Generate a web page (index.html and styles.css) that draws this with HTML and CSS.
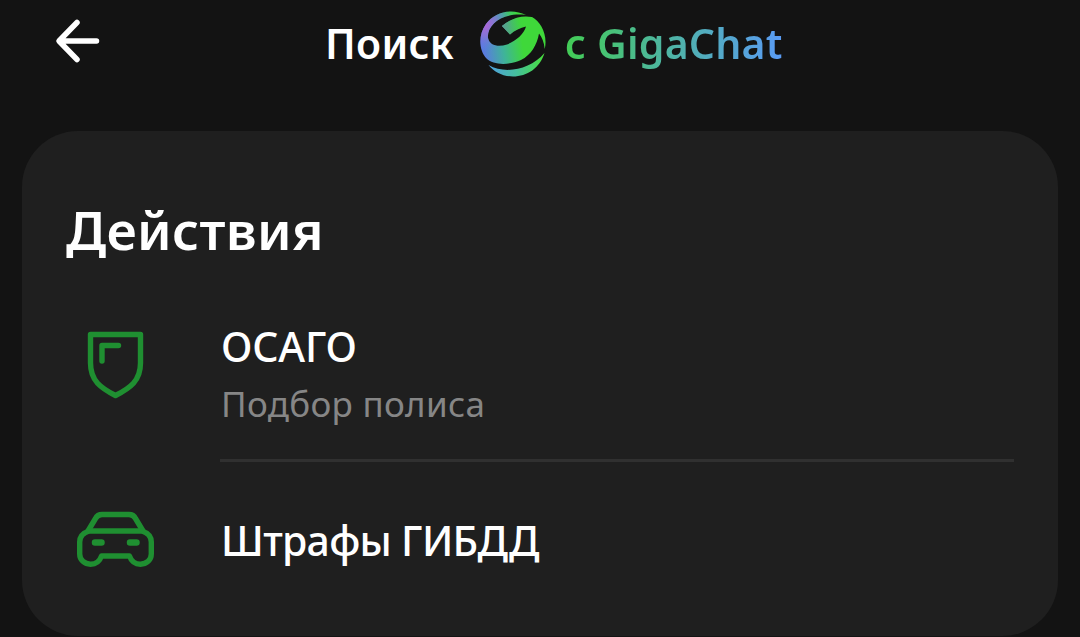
FILE: index.html
```
<!DOCTYPE html>
<html lang="ru">
<head>
<meta charset="UTF-8">
<meta name="viewport" content="width=device-width, initial-scale=1.0">
<title>Поиск с GigaChat</title>
<link rel="stylesheet" href="styles.css">
</head>
<body>

<!-- Шапка -->
<header class="header">
  <button class="back" aria-label="Назад">
    <svg width="48" height="48" viewBox="0 0 48 48">
      <path d="M25 5.500 L7 24 L25 42.500 M7.500 24 H44.500" />
    </svg>
  </button>
  <h1 class="header-title">
    <span class="word-search">Поиск</span>
    <svg class="logo" width="66" height="66" viewBox="0 0 66 66">
      <defs>
        <linearGradient id="ball" gradientUnits="userSpaceOnUse" x1="3" y1="36" x2="42" y2="30">
          <stop offset="0" stop-color="#5a7be0" />
          <stop offset="0.5" stop-color="#3fb39a" />
          <stop offset="1" stop-color="#3fd83a" />
        </linearGradient>
        <radialGradient id="violet" gradientUnits="userSpaceOnUse" cx="5" cy="14" r="27">
          <stop offset="0" stop-color="#b065d8" />
          <stop offset="0.4" stop-color="#8f70d8" stop-opacity="0.8" />
          <stop offset="1" stop-color="#5a7be8" stop-opacity="0" />
        </radialGradient>
        <linearGradient id="arc" x1="0" y1="0" x2="1" y2="0">
          <stop offset="0" stop-color="#4f9fe0" />
          <stop offset="0.5" stop-color="#45bf9c" />
          <stop offset="1" stop-color="#48e03a" />
        </linearGradient>
        <linearGradient id="tail" gradientUnits="userSpaceOnUse" x1="22" y1="18" x2="44" y2="12">
          <stop offset="0" stop-color="#5a9a90" />
          <stop offset="1" stop-color="#3fc850" stop-opacity="0" />
        </linearGradient>
        <path id="swirl" d="M46 4 C32 -3 15 0.500 6 13 C-2 24 -1 39 6 47 C14 55 30 54 41 49 C51 44 57 34 59 22.500 C62 26 64 31 64.700 38 C68 24 61 11 52 6 C42 4 31 7 22 15 L30 23.500 C35 19 40 17 46 15.500 C44 23 36 30 27 33.500 C18 36.500 9.500 34.500 8 27 C6.500 14 22 1 46 4 Z" />
      </defs>
      <use href="#swirl" fill="url(#ball)" />
      <use href="#swirl" fill="url(#violet)" />
      <path fill="url(#tail)" d="M22 15 Q32 7 44 5.300 L46 15.500 Q37 17.500 30 23.500 Z" />
      <path fill="url(#arc)" d="M8.500 54 C25 63.500 50 59 64.500 42 C60 57 47 65.500 33 65.500 C23 65.500 14 61 8.500 54 Z" />
    </svg>
    <span class="word-giga">с GigaChat</span>
  </h1>
</header>

<!-- Карточка с действиями -->
<main class="card">
  <h2 class="card-title">Действия</h2>

  <div class="action">
    <svg class="icon" width="80" height="80" viewBox="0 0 80 80">
      <path d="M15.500 9.500 H65.500 V38 C65.500 56 55 63 40.500 70.500 C26 63 15.500 56 15.500 38 Z" />
      <path d="M27 36 V20.500 H43.500" />
    </svg>
    <div class="action-text">
      <div class="action-name osago">ОСАГО</div>
      <div class="action-info">Подбор полиса</div>
    </div>
  </div>

  <div class="action last">
    <svg class="icon car" width="80" height="80" viewBox="0 0 80 80">
      <path d="M13 31 L20.500 18.500 Q22.500 14.500 27 14.500 H54 Q58.500 14.500 60.500 18.500 L68 31" />
      <path d="M14 31 H67 C73 33 76.300 37 76.300 42 V54 C76.300 60 71.500 64.200 65.500 64.200 C59.500 64.200 56 60.500 54.500 56 H26.500 C25 60.500 21.500 64.200 15.500 64.200 C9.500 64.200 4.700 60 4.700 54 V42 C4.700 37 8 33 14 31 Z" />
      <path class="lamp" d="M20 42.500 H26.500 M55 42.500 H61.500" />
    </svg>
    <div class="action-text">
      <div class="action-name fines">Штрафы ГИБДД</div>
    </div>
  </div>
</main>

</body>
</html>
```

FILE: styles.css
```
* {
    box-sizing: border-box;
}
body {
    margin: 0;
    background-color: #131313;
    color: white;
    font-family: "Noto Sans", "Open Sans", sans-serif;
    overflow: hidden;
}
h1, h2 {
    margin: 0;
}

/* Шапка */
.header {
    display: grid;
    grid-template-columns: 102px 1fr;
    align-items: center;
    height: 85px;
    padding-left: 52px;
    margin-bottom: 46px;
}
.back {
    width: 48px;
    height: 48px;
    margin-bottom: 3px;
    padding: 0;
    border: none;
    background: none;
    cursor: pointer;
}
.back svg {
    display: block;
    fill: none;
    stroke: white;
    stroke-width: 5.5;
    stroke-linecap: round;
    stroke-linejoin: round;
}
.header-title {
    display: flex;
    align-items: center;
    padding-left: 171px;
    font-size: 41px;
    font-weight: 600;
    line-height: 60px;
    white-space: nowrap;
}
.word-search {
    width: 155px;
    letter-spacing: 0.3px;
}
.logo {
    display: block;
    margin-top: 3px;
    overflow: visible;
}
.word-giga {
    margin-left: 19px;
    letter-spacing: 0.2px;
    background: linear-gradient(90deg, #43cc55, #4fb3a8 50%, #5a9bf5);
    -webkit-background-clip: text;
    background-clip: text;
    color: transparent;
}

/* Карточка */
.card {
    height: 505px;
    margin: 0 22px;
    padding: 69px 44px 0 53px;
    border-radius: 56px;
    background-color: #1f1f1f;
}
.card-title {
    margin-left: -9px;
    margin-bottom: 56px;
    font-size: 53px;
    font-weight: 600;
    line-height: 60px;
    letter-spacing: 0.3px;
}
.action {
    display: grid;
    grid-template-columns: 80px 1fr;
    column-gap: 65px;
    height: 146px;
}
.icon {
    margin-top: 9px;
    fill: none;
    stroke: #1f8f31;
    stroke-width: 5.4;
    stroke-linecap: round;
    stroke-linejoin: round;
}
.lamp {
    stroke-width: 6.5;
}
.action-text {
    padding-top: 1px;
    border-bottom: 3px solid #303030;
    line-height: 58px;
    white-space: nowrap;
    text-indent: 1px;
}
.action-name {
    font-size: 41px;
    font-weight: 500;
}
.osago {
    letter-spacing: -0.2px;
}
.fines {
    letter-spacing: -0.7px;
}
.action-info {
    font-size: 35px;
    letter-spacing: 0.3px;
    color: #868686;
}
.last {
    height: 154px;
    align-items: center;
}
.last .icon {
    margin-top: 2px;
}
.last .action-text {
    border: none;
}
```
